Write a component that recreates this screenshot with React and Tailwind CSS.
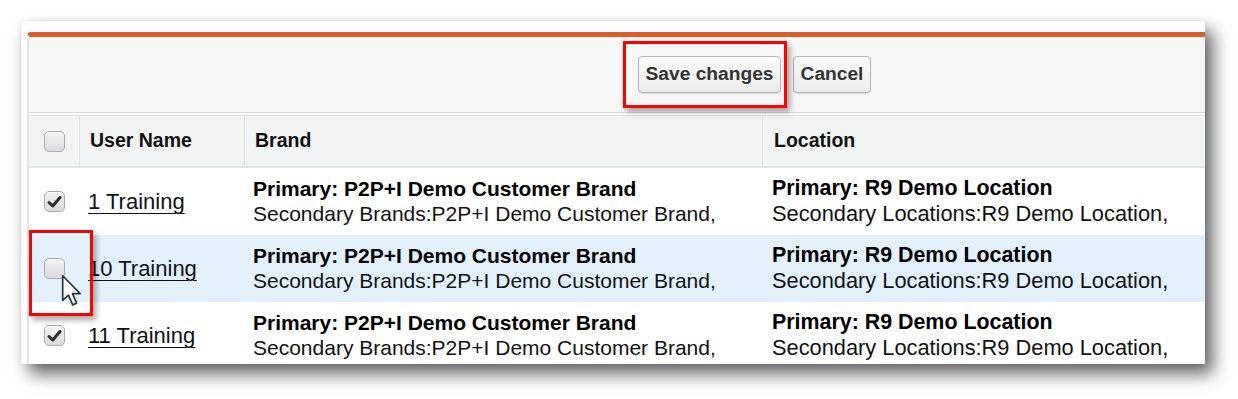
/**
 * UserAssignments — Salesforce-style inline edit table with the
 * "Save changes" button and one row checkbox called out in red.
 */

const ROWS = [
  { id: 1, name: "1 Training", checked: true, highlight: false },
  { id: 10, name: "10 Training", checked: false, highlight: true },
  { id: 11, name: "11 Training", checked: true, highlight: false },
];

const FONT = { fontFamily: '"Liberation Sans", Arial, sans-serif' };

function Checkbox({ checked }) {
  return (
    <div className="w-[21px] h-[21px] rounded-[5px] border border-[#a9abad] bg-gradient-to-b from-[#f4f4f4] to-[#d9dadc] shadow-[inset_0_1px_0_#fff] flex items-center justify-center">
      {checked && (
        <svg width="15" height="13" viewBox="0 0 15 13">
          <path d="M2 7.5 L5.8 11 L13 2.5" fill="none" stroke="#2e2e2e" strokeWidth="3" strokeLinecap="round" strokeLinejoin="round" />
        </svg>
      )}
    </div>
  );
}

function Button({ children, className = "" }) {
  return (
    <button
      className={`h-[37px] rounded-[4px] border border-[#b3b5b7] bg-gradient-to-b from-[#fbfbfb] to-[#ececec] shadow-[0_1px_1px_rgba(0,0,0,0.12)] text-[19.2px] font-bold text-[#333] ${className}`}
    >
      {children}
    </button>
  );
}

export default function App() {
  return (
    <div className="w-[1238px] h-[399px] bg-white pt-[21px] pl-[21px]" style={FONT}>
      <div className="relative w-[1184px] h-[343px] bg-white pt-[11px] pl-[6px] shadow-[8px_10px_16px_rgba(0,0,0,0.6),0_0_6px_rgba(0,0,0,0.08)]">
        <div className="h-full overflow-hidden rounded-tl-[4px] border-t-[5px] border-t-[#db5c2c] border-l-2 border-l-[#e3e5e7] bg-white">
          {/* ── Toolbar ───────────────────────────── */}
          <div className="h-[76px] bg-[#f7f7f7] border-b border-[#d6d8da] flex items-center pl-[609px] gap-[12px]">
            <Button className="w-[143px]">Save changes</Button>
            <Button className="w-[78px]">Cancel</Button>
          </div>

          {/* ── Header ────────────────────────────── */}
          <div className="mt-[2px] h-[53px] grid grid-cols-[51px_165px_518px_1fr] bg-[#f2f3f3] border-t border-[#e3e5e7] border-b-2 border-b-[#e1e4e6] text-[19.5px] font-bold text-[#111]">
            <div className="flex items-center justify-center border-r border-[#e0e2e4]">
              <Checkbox checked={false} />
            </div>
            <div className="flex items-center pl-[10px] border-r border-[#e0e2e4]">User Name</div>
            <div className="flex items-center pl-[10px] border-r border-[#e0e2e4]">Brand</div>
            <div className="flex items-center pl-[11px]">Location</div>
          </div>

          {/* ── Rows ──────────────────────────────── */}
          {ROWS.map((r) => (
            <div
              key={r.id}
              className={`h-[67px] grid grid-cols-[51px_165px_518px_1fr] text-[21px] text-[#111] leading-[25px] ${
                r.highlight ? "bg-[#e2f1fc]" : "bg-white"
              }`}
            >
              <div className="flex items-center justify-center">
                <Checkbox checked={r.checked} />
              </div>
              <div className="flex items-center pl-[8px]">
                <a className="text-[22px] underline underline-offset-[4px] decoration-1 text-[#111]">{r.name}</a>
              </div>
              <div className="flex flex-col justify-center pl-[8px] pb-[2px]">
                <span className="font-bold text-[#000]">Primary: P2P+I Demo Customer Brand</span>
                <span>Secondary Brands:P2P+I Demo Customer Brand,</span>
              </div>
              <div className="flex flex-col justify-center pl-[9px] pb-[2px]">
                <span className="font-bold text-[#000] text-[21.4px]">Primary: R9 Demo Location</span>
                <span className="text-[21.8px]">Secondary Locations:R9 Demo Location,</span>
              </div>
            </div>
          ))}
        </div>

        {/* ── Callouts ──────────────────────────── */}
        <div className="absolute left-[602px] top-[20px] w-[164px] h-[67px] border-[3px] border-[#f00] shadow-[3px_4px_6px_rgba(0,0,0,0.35)]" />
        <div className="absolute left-[8px] top-[209px] w-[64px] h-[86px] border-[3px] border-[#f00] shadow-[3px_4px_6px_rgba(0,0,0,0.35)]" />

        {/* ── Mouse pointer ─────────────────────── */}
        <svg className="absolute left-[40px] top-[253px]" width="22" height="34" viewBox="0 0 13 20">
          <path
            d="M1 1 L1 15.5 L4.4 12.4 L6.9 18.2 L9.2 17.2 L6.8 11.6 L11.3 11.6 Z"
            fill="#fff"
            stroke="#2a3440"
            strokeWidth="1"
            strokeLinejoin="round"
          />
        </svg>
      </div>
    </div>
  );
}
